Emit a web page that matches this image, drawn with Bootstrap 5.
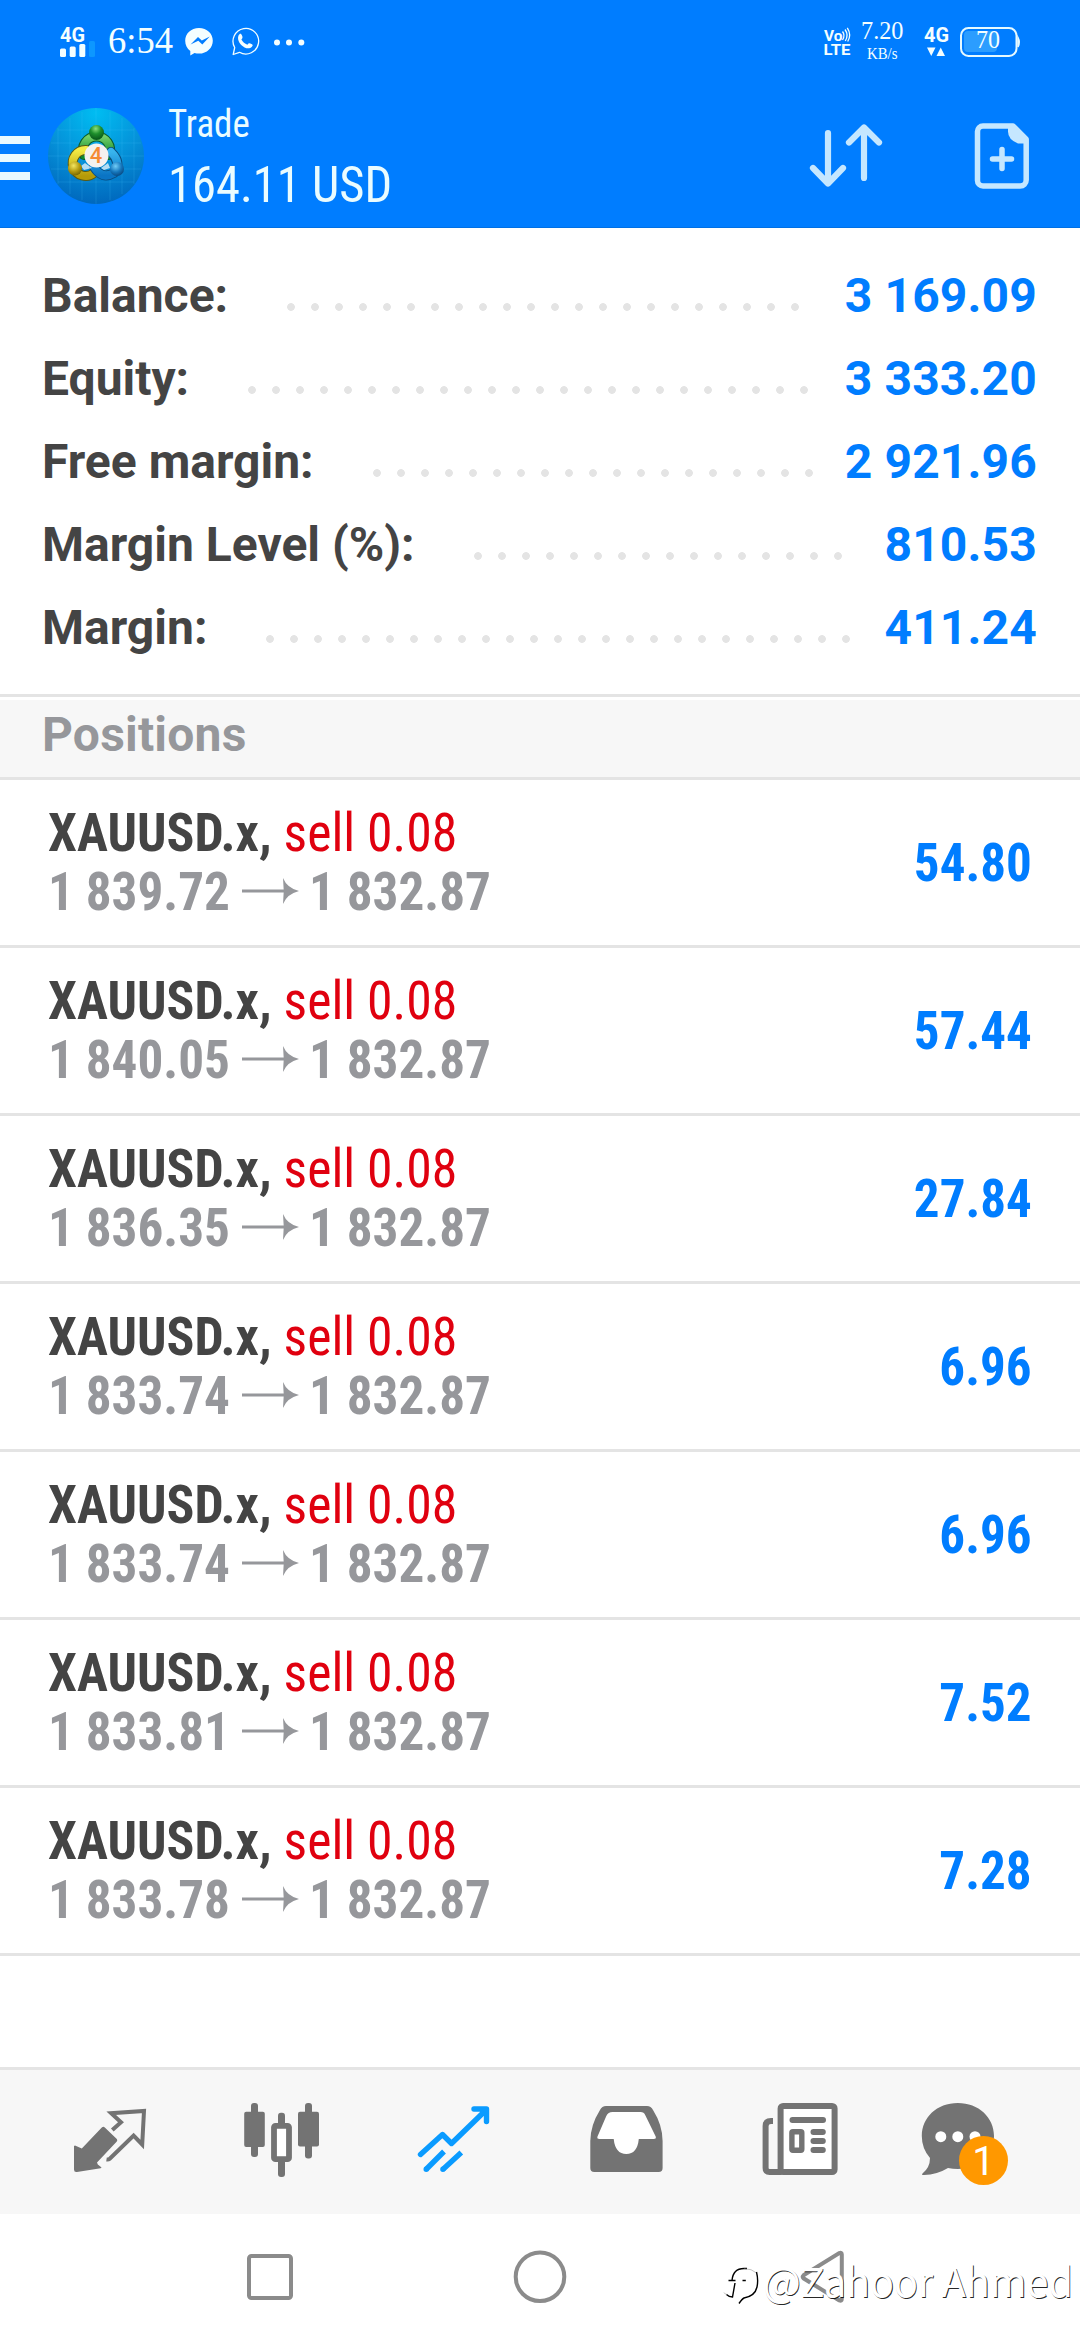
<!DOCTYPE html>
<html lang="en">
<head>
<meta charset="utf-8">
<meta name="viewport" content="width=device-width, initial-scale=1">
<title>Trade</title>
<link href="https://cdn.jsdelivr.net/npm/bootstrap@5.3.0/dist/css/bootstrap.min.css" rel="stylesheet">
<style>
  :root { --blue: #007dff; --ink: #444; --mute: #96979b; --line: #e4e4e4; --bar: #f7f7f7; --icon: #737373; }
  body { width: 1080px; height: 2340px; overflow: hidden; font-family: Roboto, "Noto Sans", sans-serif; color: var(--ink); }
  svg { display: block; }
  .top-area { background: var(--blue); height: 228px; border-bottom: 1px solid #0070e4; }
  .status-strip { height: 84px; }
  .title-strip { height: 143px; }
  .cond { font-family: "Roboto Condensed", Roboto, sans-serif; display: inline-block; transform-origin: left center; white-space: nowrap; }
  .titles { padding-top: 10px; margin-left: 17px; color: #eafcff; }
  .titles .cond { line-height: 61px; transform: scaleX(.972); }
  .t-name { font-size: 38px; }
  .t-sum { font-size: 50px; }
  .account { height: 466px; padding: 26px 43px 0 42px; font-size: 48px; font-weight: 700; line-height: 83px; }
  .amount { color: var(--blue); letter-spacing: .15px; }
  .leader { height: 8px; width: calc(var(--dots) * 24px - 16px); margin: 49px auto 0 59px; background: radial-gradient(circle at 4px 4px, #e4e4e4 3.5px, transparent 4.2px) 0 0 / 24px 8px repeat-x; }
  .section-head { height: 86px; border-top: 3px solid var(--line); border-bottom: 3px solid var(--line); padding-top: 3px; }
  .section-head h2 { background: var(--bar); height: 77px; line-height: 69px; padding-left: 42px; font-size: 48px; font-weight: 700; color: var(--mute); letter-spacing: .2px; }
  .pos { height: 168px; border-bottom: 3px solid var(--line); padding: 0 48px; font-size: 54px; }
  .deal { padding-bottom: 2px; }
  .pos .l1, .pos .l2 { height: 59px; line-height: 59px; }
  .pos .l1 { transform: scaleX(.958); }
  .pos .l2 { color: var(--mute); }
  .pos .sell { color: #e0000f; font-weight: 400; }
  .num { width: 182px; }
  .num .cond { transform: scaleX(.948); }
  .profit { transform: scaleX(.945); transform-origin: right center !important; color: var(--blue); line-height: 59px; }
  .spacer { height: 111px; }
  .tabs { height: 147px; border-top: 3px solid var(--line); background: var(--bar); padding: 0 24px; }
  .tabs .tab { width: 172px; color: var(--icon); }
  .tabs .tab.active { color: #0a9bff; }
  .count { width: 49px; height: 49px; left: 75px; top: 65.5px; background: #ff9800; color: #fff; font-size: 40px; line-height: 51px; }
  .sysnav { height: 126px; }
  .stamp { left: 763px; top: 2250px; font: 400 40px/60px "Noto Sans CJK SC", "Noto Sans", sans-serif; letter-spacing: -.3px; color: #fff; text-shadow: .8px .8px .4px rgba(0,0,0,.85); white-space: nowrap; }
  .stamp-logo { left: 720px; top: 2255px; }
</style>
</head>
<body class="bg-white position-relative">
<header class="top-area">
  <div class="status-strip d-flex justify-content-between">
    <svg width="320" height="84" viewBox="0 0 320 84" fill="#f4feff">
      <text x="60" y="42" font-family="Roboto" font-weight="700" font-size="20" textLength="25" lengthAdjust="spacingAndGlyphs">4G</text>
      <rect x="60" y="48.5" width="6" height="8.5" rx="1.5"/><rect x="69.7" y="46.5" width="6" height="10.5" rx="1.5"/><rect x="79.3" y="44" width="6" height="13" rx="1.5"/><rect x="89" y="41" width="6" height="16" rx="1.5" fill="#0d97ff"/>
      <text x="108" y="53" font-family="Liberation Serif" font-size="38" textLength="65" lengthAdjust="spacingAndGlyphs">6:54</text>
      <path d="M199 28c8 0 13.800 5.700 13.800 12.700S207 53.600 199 53.600c-1.700 0-3-.2-4.500-.7L190.300 55.600V51C187 48.500 185.200 45 185.200 40.700 185.200 33.700 191 28 199 28z"/>
      <path d="M190.500 44.500l7.500-7.500 3.800 3.500 8-4-7.500 8-4-3.800z" fill="#007dff"/>
      <path d="M233.200 54.500l1.500-7a12.800 12.800 0 1 1 4.800 4.800z" fill="none" stroke="#f4feff" stroke-width="1.300" stroke-linejoin="round"/>
      <path d="M238.500 35.500c1.500-2.500 2.700-2 3.400-.2.900 2.200.9 2.500-.5 4.200 1.500 2.600 3.300 4.300 6 5.200 1.500-1.800 2-1.900 4-.7 1.600.9 1.700 1.300.5 2.700-2 2-4.400 2.100-7.300.7-3.600-1.700-8-7-6.100-11.900z"/>
      <circle cx="277" cy="42.500" r="3"/><circle cx="289" cy="42.500" r="3"/><circle cx="301.300" cy="42.500" r="3"/>
    </svg>
    <svg width="280" height="84" viewBox="800 0 280 84" fill="#f4feff">
      <text x="824" y="41" font-family="Roboto" font-weight="700" font-size="14.500" textLength="18.500" lengthAdjust="spacingAndGlyphs">Vo</text>
      <path d="M842.500 31.500q3 4 0 8.500M845 29.500q4 5.500.3 11.500M847.300 27.800q4.500 7 .4 13.700" fill="none" stroke="#f4feff" stroke-width="1.300"/>
      <text x="823.500" y="55" font-family="Roboto" font-weight="700" font-size="15.500" textLength="27" lengthAdjust="spacingAndGlyphs">LTE</text>
      <text x="861" y="39" font-family="Liberation Serif" font-size="25" textLength="42.500" lengthAdjust="spacingAndGlyphs">7.20</text>
      <text x="867" y="59" font-family="Liberation Serif" font-size="16.500" textLength="30.500" lengthAdjust="spacingAndGlyphs">KB/s</text>
      <text x="924" y="41.500" font-family="Roboto" font-weight="700" font-size="20" textLength="25" lengthAdjust="spacingAndGlyphs">4G</text>
      <path d="M927 47.500h8.500l-4.250 8.500zM936.500 56h8.500l-4.250-8.500z"/>
      <rect x="964" y="31" width="33" height="21" rx="4" fill="#2b9dff"/>
      <rect x="961" y="28" width="55.500" height="28" rx="7.500" fill="none" stroke="#e6faff" stroke-width="2"/>
      <path d="M1018 37.500q2.500 4.500 0 9.500z" stroke="#e6faff" stroke-width="1.500"/>
      <text x="976" y="48.300" font-family="Liberation Serif" font-size="25" textLength="24" lengthAdjust="spacingAndGlyphs">70</text>
    </svg>
  </div>
  <div class="title-strip d-flex">
    <svg width="151" height="143" viewBox="0 84 151 143">
      <defs>
        <radialGradient id="disc" cx=".5" cy=".05" r=".95"><stop offset="0" stop-color="#00bdf2"/><stop offset=".55" stop-color="#0590d8"/><stop offset="1" stop-color="#0068bd"/></radialGradient>
        <linearGradient id="gr" x2="0" y2="1"><stop stop-color="#74d069"/><stop offset="1" stop-color="#118a2d"/></linearGradient>
        <linearGradient id="ye" x2="0" y2="1"><stop stop-color="#f5ec45"/><stop offset="1" stop-color="#b59a08"/></linearGradient>
        <linearGradient id="bl" x2="0" y2="1"><stop stop-color="#38b4ee"/><stop offset="1" stop-color="#0a74c4"/></linearGradient>
        <radialGradient id="gh" cx=".45" cy=".25" r=".7"><stop stop-color="#8be07c"/><stop offset=".5" stop-color="#1e8f2c"/><stop offset="1" stop-color="#0a5c1c"/></radialGradient>
        <radialGradient id="yh" cx=".4" cy=".3" r=".7"><stop stop-color="#f3e661"/><stop offset=".6" stop-color="#b39a10"/><stop offset="1" stop-color="#7b6a05"/></radialGradient>
        <radialGradient id="bh" cx=".4" cy=".3" r=".7"><stop stop-color="#72cdf7"/><stop offset=".6" stop-color="#1577bd"/><stop offset="1" stop-color="#0a4c86"/></radialGradient>
      </defs>
      <path d="M0 136h30v8H0zM0 154h30v8H0zM0 172h30v8H0z" fill="#e9faff"/>
      <circle cx="96" cy="156" r="48" fill="url(#disc)"/>
      <path d="M58 128v56M70 118v76M82 112v88M96 108v96M110 112v88M122 118v76M134 128v56M58 130h76M51 143h90M48 156h96M51 169h90M58 182h76" stroke="#4cc8ff" stroke-opacity=".18" fill="none"/>
      <g fill="none" stroke-linecap="round">
        <path d="M84 155a13.500 13.500 0 1 1 25 0" stroke="#0a5c2c" stroke-width="10"/>
        <path d="M84 155a13.500 13.500 0 1 1 25 0" stroke="url(#gr)" stroke-width="8"/>
        <path d="M86 150a13 13 0 1 0 8 23" stroke="#5c5a10" stroke-width="10"/>
        <path d="M86 150a13 13 0 1 0 8 23" stroke="url(#ye)" stroke-width="8"/>
        <path d="M94 167q8 13 20 6 8-10-3-21" stroke="#0b4d80" stroke-width="10"/>
        <path d="M94 167q8 13 20 6 8-10-3-21" stroke="url(#bl)" stroke-width="8"/>
      </g>
      <path d="M81 166l4-3 7 5-8 2zM101 168l7-5 2 5-6 2z" fill="#fff" opacity=".7"/>
      <circle cx="96.500" cy="132.500" r="7.500" fill="url(#gh)"/>
      <circle cx="75" cy="168.500" r="7" fill="url(#yh)"/>
      <circle cx="117" cy="169" r="7" fill="url(#bh)"/>
      <circle cx="96.500" cy="155.500" r="12" fill="#f4f1ef"/>
      <text x="96" y="163" text-anchor="middle" font-family="Roboto" font-weight="500" font-size="22" fill="#f58a33">4</text>
    </svg>
    <div class="titles flex-grow-1 d-flex flex-column align-items-start">
      <span class="cond t-name">Trade</span>
      <span class="cond t-sum">164.11 USD</span>
    </div>
    <svg width="280" height="143" viewBox="800 84 280 143" fill="none" stroke="#c5e7ff" stroke-width="6.200" stroke-linecap="round" stroke-linejoin="round">
      <path d="M828 133v50M813 168l15 15.500 15-15.500M864 178v-50M849 142.500l15-15 15 15"/>
      <path d="M983 126h30l13.200 13.200V180a6 6 0 0 1-6 6H983a5.500 5.500 0 0 1-5.500-5.500V131.500a5.500 5.500 0 0 1 5.500-5.500z" stroke-width="5.500"/>
      <path d="M1008 126h6l12.500 13v4.500h-8.500q-10-4-10-12z" fill="#c5e7ff" stroke="none"/>
      <path d="M1002 149.500v19M992.500 159h19" stroke-width="5.500"/>
    </svg>
  </div>
</header>

<main>
  <section class="account">
    <div class="d-flex"><span>Balance:</span><i class="leader" style="--dots:22"></i><span class="amount">3 169.09</span></div>
    <div class="d-flex"><span>Equity:</span><i class="leader" style="--dots:24"></i><span class="amount">3 333.20</span></div>
    <div class="d-flex"><span>Free margin:</span><i class="leader" style="--dots:19"></i><span class="amount">2 921.96</span></div>
    <div class="d-flex"><span>Margin Level (%):</span><i class="leader" style="--dots:16"></i><span class="amount">810.53</span></div>
    <div class="d-flex"><span>Margin:</span><i class="leader" style="--dots:25"></i><span class="amount">411.24</span></div>
  </section>
  <div class="section-head"><h2 class="m-0">Positions</h2></div>
  <div id="positions"></div>
</main>
<div class="spacer"></div>
<nav class="tabs d-flex">
  <a class="tab"><svg width="172" height="144" viewBox="24 2070 172 144" fill="none" stroke="currentColor" stroke-width="4"><path d="M74 2146l1-.5 6.800 3 20-21q1.500-1.500 3 0l12 11.500q1 1.300 0 2.600L97 2162.500l.8 2 3.800 3-1 .7L77 2172q-3 .5-3-2.500z" fill="currentColor" stroke="none"/><path d="M112.300 2130l8.700-7.800-9.800-9 32.800-2.200-1.800 33.500-8.600-9L109.500 2159q-1 .8-3 .5"/></svg></a>
  <a class="tab"><svg width="172" height="144" viewBox="196 2070 172 144" fill="currentColor"><rect x="251" y="2103" width="7" height="54" rx="3"/><rect x="244.200" y="2111.700" width="20.600" height="35.300" rx="2"/><rect x="305" y="2103" width="7" height="55.500" rx="3"/><rect x="298" y="2111.700" width="21" height="34.700" rx="2"/><rect x="278" y="2112.700" width="7" height="20" rx="3"/><rect x="278" y="2155" width="7" height="22" rx="3"/><rect x="274" y="2125.800" width="15" height="33.400" rx="1.500" fill="#fff" stroke="currentColor" stroke-width="5.800"/></svg></a>
  <a class="tab active"><svg width="172" height="144" viewBox="368 2070 172 144" fill="none" stroke="currentColor" stroke-width="5.400"><path d="M420.500 2154.500l22-20 9 9L486 2110M474 2109h12.500v12.500" stroke-linecap="round" stroke-linejoin="round"/><path d="M444 2151.500L426 2169.500M461.300 2152.500L442.800 2169.500"/><path d="M426.200 2169.300h.01M442.900 2169.300h.01" stroke-linecap="round"/></svg></a>
  <a class="tab"><svg width="172" height="144" viewBox="540 2070 172 144"><path fill="currentColor" d="M606 2106h41q4 0 6 4 9.500 15 9.600 31v27q0 4-4 4h-64.300q-4 0-4-4v-27q.2-16 9.700-31 2-4 6-4z"/><path fill="#fff" d="M612.500 2112h28q3.500 0 4.800 3.200l10.400 21.300q.8 2.500-2 2.500h-14.900q-1.500 15-12.500 15t-12.600-15h-14.200q-2.800 0-2-2.500l8.800-20.500q1.800-4 6.200-4z"/></svg></a>
  <a class="tab"><svg width="172" height="144" viewBox="712 2070 172 144" fill="none" stroke="currentColor" stroke-width="6"><rect x="780.600" y="2106" width="54" height="66" rx="2.500" fill="#fff"/><path d="M773 2121h-2q-5.400 0-5.400 5v42q0 4 4 4h12"/><path d="M792.500 2120h30.500M813.500 2132h9.300M813.500 2141h9.300M813.500 2150h9.300" stroke-linecap="round"/><rect x="791.900" y="2131.800" width="9.900" height="18.400" rx="1" stroke-width="5.400"/></svg></a>
  <a class="tab position-relative"><svg width="172" height="144" viewBox="884 2070 172 144"><path fill="currentColor" d="M957.800 2103c21 0 36.200 14.500 36.200 33s-15 33-36.200 33q-5 0-9.800-1-11 6.700-24 7-3 0-1.500-1.500 7.500-6 7.500-15.500-8.200-9.500-8.200-22c0-18.500 15-33 36-33z"/><g fill="#fff"><circle cx="940.800" cy="2136.700" r="5.500"/><circle cx="957.800" cy="2136.700" r="5.500"/><circle cx="975" cy="2136.700" r="5.500"/></g></svg>
    <span class="count position-absolute rounded-circle text-center">1</span></a>
</nav>
<footer class="sysnav">
  <svg width="1080" height="126" viewBox="0 2214 1080 126" fill="none" stroke="#8b8b8b" stroke-width="4"><rect x="249" y="2256" width="42" height="42" rx="2.500"/><circle cx="540" cy="2276.800" r="24.300"/><path d="M803.500 2275.300L839.300 2253q2.500-1 2.500 1.500v44.500q0 2.500-2.500 1.500L803.500 2278.300q-1.500-1.500 0-3z"/></svg>
</footer>
<svg class="stamp-logo position-absolute" width="44" height="54" viewBox="0 0 44 54" fill="none"><path d="M12 25.500q1-12 12-12h3M8.500 25.500h7M15 28l-2.500 14q-3.500 0-6-2.500M36.500 17q2 8 .5 15-2 9-13 11-2 1-5 5.500M22.500 25.500h3.300" stroke="#000" stroke-width="1.400"/><path d="M24 13.700q8 0 12 4M7 39.500q-2 0-3-2" stroke="#888" stroke-opacity=".5"/></svg>
<div class="stamp position-absolute">@Zahoor Ahmed</div>

<script src="https://cdn.jsdelivr.net/npm/bootstrap@5.3.0/dist/js/bootstrap.bundle.min.js"></script>
<script>
  const positions = [
    ["1 839.72", "54.80"], ["1 840.05", "57.44"], ["1 836.35", "27.84"], ["1 833.74", "6.96"],
    ["1 833.74", "6.96"], ["1 833.81", "7.52"], ["1 833.78", "7.28"]
  ];
  document.getElementById("positions").innerHTML = positions.map(([open, profit]) => `
    <div class="pos d-flex justify-content-between align-items-center">
      <div class="deal">
        <div class="l1 cond fw-bold d-block">XAUUSD.x, <span class="sell">sell 0.08</span></div>
        <div class="l2 d-flex align-items-center fw-bold">
          <span class="num"><span class="cond">${open}</span></span>
          <svg width="79" height="59" viewBox="0 0 79 59"><path d="M12 27.500h42v3H12z" fill="currentColor"/><path d="M53 16q4 10 16 13-12 3-16 13 1.500-13 0-26z" fill="currentColor"/></svg>
          <span class="num"><span class="cond">1 832.87</span></span>
        </div>
      </div>
      <span class="profit cond fw-bold">${profit}</span>
    </div>`).join("");
</script>
</body>
</html>
